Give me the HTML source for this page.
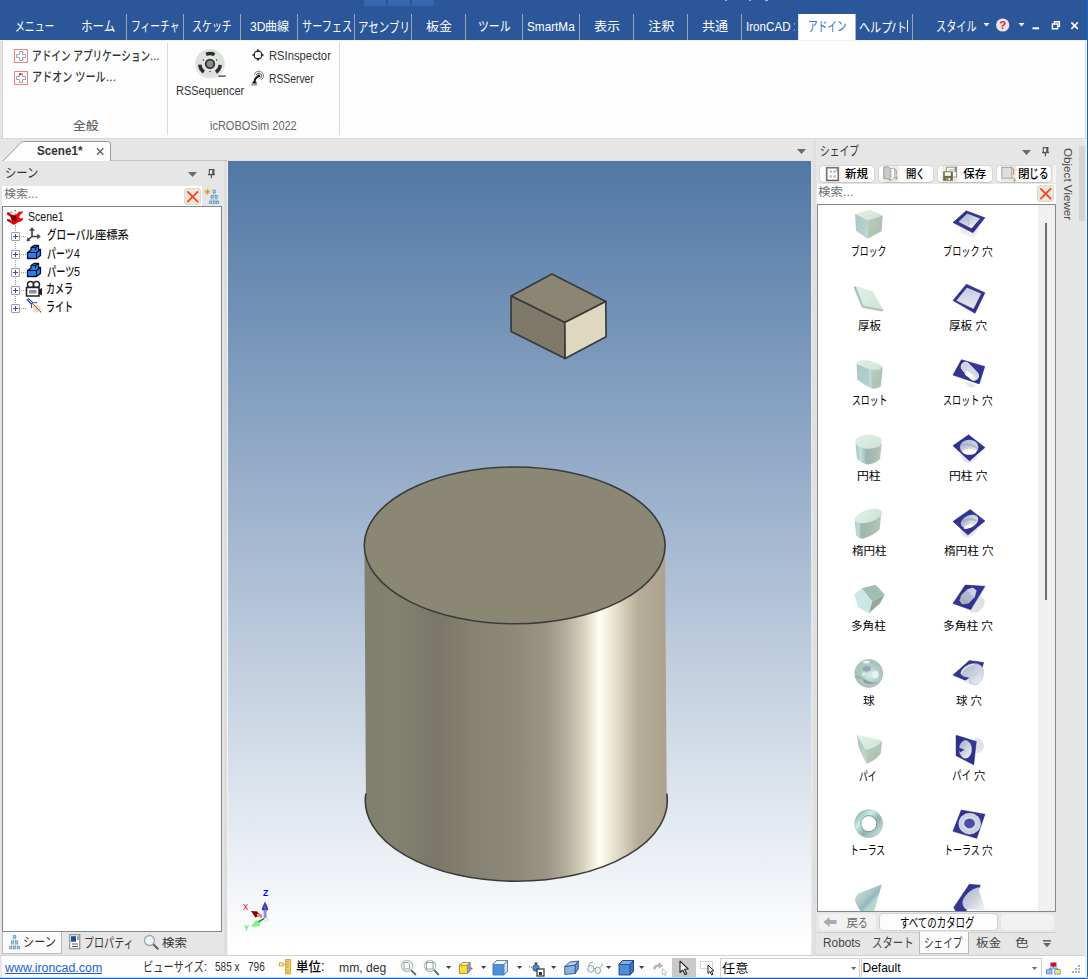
<!DOCTYPE html>
<html lang="ja">
<head>
<meta charset="utf-8">
<title>IronCAD - Scene1</title>
<style>
html,body{margin:0;padding:0;}
body{width:1088px;height:979px;overflow:hidden;background:#e6e6e6;font-family:"Liberation Sans","Noto Sans CJK JP",sans-serif;}
#app{position:relative;width:1088px;height:979px;overflow:hidden;background:#e6e6e6;}
#app *{box-sizing:border-box;}
.b{position:absolute;}
header,nav,section,aside,main,footer,ul,li,h1,h2,h3,button{margin:0;padding:0;border:0;background:none;font:inherit;display:block;list-style:none;}
.t{position:absolute;white-space:pre;line-height:1;transform-origin:0 0;margin:0;padding:0;font-weight:normal;text-decoration:none;}
.r{display:inline-block;white-space:pre;line-height:1;transform-origin:0 0;vertical-align:baseline;}
.j{font-weight:500;}
svg{position:absolute;overflow:visible;}
</style>
</head>
<body>
<div id="app">

<header>
<div class="b" style="left:0px;top:0px;width:1088px;height:40px;background:#2b579a;"></div>
<div class="b" style="left:364px;top:0px;width:22px;height:6px;background:#3566b0;"></div>
<div class="b" style="left:388px;top:0px;width:22px;height:6px;background:#3566b0;"></div>
<div class="b" style="left:412px;top:0px;width:22px;height:6px;background:#3566b0;"></div>
<div class="b" style="left:725.4px;top:0px;width:1.6px;height:1px;background:rgba(240,244,252,0.6);"></div>
<div class="b" style="left:749.4px;top:0px;width:1.6px;height:1px;background:rgba(240,244,252,0.6);"></div>
<div class="b" style="left:765.2px;top:0px;width:2.6px;height:1px;background:rgba(240,244,252,0.6);"></div>
</header>
<nav>
<div class="b" style="left:126px;top:14px;width:1px;height:26px;background:#9aa2b4;"></div>
<div class="b" style="left:183px;top:14px;width:1px;height:26px;background:#9aa2b4;"></div>
<div class="b" style="left:240px;top:14px;width:1px;height:26px;background:#9aa2b4;"></div>
<div class="b" style="left:297px;top:14px;width:1px;height:26px;background:#9aa2b4;"></div>
<div class="b" style="left:354px;top:14px;width:1px;height:26px;background:#9aa2b4;"></div>
<div class="b" style="left:411px;top:14px;width:1px;height:26px;background:#9aa2b4;"></div>
<div class="b" style="left:465px;top:14px;width:1px;height:26px;background:#9aa2b4;"></div>
<div class="b" style="left:522px;top:14px;width:1px;height:26px;background:#9aa2b4;"></div>
<div class="b" style="left:579px;top:14px;width:1px;height:26px;background:#9aa2b4;"></div>
<div class="b" style="left:633px;top:14px;width:1px;height:26px;background:#9aa2b4;"></div>
<div class="b" style="left:687px;top:14px;width:1px;height:26px;background:#9aa2b4;"></div>
<div class="b" style="left:741px;top:14px;width:1px;height:26px;background:#9aa2b4;"></div>
<div class="b" style="left:912px;top:14px;width:1px;height:26px;background:#9aa2b4;"></div>
<div class="b" style="left:798px;top:14px;width:58px;height:27px;background:#fff;border-left:1px solid #e4e8f0;border-right:1px solid #aeb4c0;"></div>
<span class="t" style="left:14.90px;top:20.00px;font-size:13px;color:#fff;"><span class="r" style="font-size:13.52px;width:39.31px;transform:scaleX(0.7269)">メニュー</span></span>
<span class="t" style="left:81.00px;top:20.00px;font-size:13px;color:#fff;"><span class="r" style="font-size:13.52px;width:34.28px;transform:scaleX(0.8537)">ホーム</span></span>
<span class="t" style="left:130.80px;top:20.00px;font-size:13px;color:#fff;"><span class="r" style="font-size:13.52px;width:48.50px;transform:scaleX(0.7219)">フィーチャ</span></span>
<span class="t" style="left:191.65px;top:20.00px;font-size:13px;color:#fff;"><span class="r" style="font-size:13.52px;width:39.83px;transform:scaleX(0.7365)">スケッチ</span></span>
<span class="t" style="left:249.75px;top:20.00px;font-size:13px;color:#fff;"><span class="r" style="font-size:13.0px;width:15.49px;transform:scaleX(0.9318)">3D</span><span class="r" style="font-size:11.96px;width:24.21px;transform:scaleX(1.0128)">曲線</span></span>
<span class="t" style="left:302.00px;top:20.00px;font-size:13px;color:#fff;"><span class="r" style="font-size:13.52px;width:50.09px;transform:scaleX(0.7500)">サーフェス</span></span>
<span class="t" style="left:357.80px;top:21.00px;font-size:13px;color:#fff;"><span class="r" style="font-size:13.52px;width:51.90px;transform:scaleX(0.7757)">アセンブリ</span></span>
<span class="t" style="left:425.95px;top:20.00px;font-size:13px;color:#fff;"><span class="r" style="font-size:11.96px;width:26.01px;transform:scaleX(1.0881)">板金</span></span>
<span class="t" style="left:477.75px;top:20.00px;font-size:13px;color:#fff;"><span class="r" style="font-size:13.52px;width:32.62px;transform:scaleX(0.8043)">ツール</span></span>
<span class="t" style="left:526.50px;top:20.00px;font-size:13px;color:#fff;"><span class="r" style="font-size:13px;width:47.67px;transform:scaleX(0.9039)">SmartMa</span></span>
<span class="t" style="left:594.30px;top:20.00px;font-size:13px;color:#fff;"><span class="r" style="font-size:11.96px;width:26.20px;transform:scaleX(1.0958)">表示</span></span>
<span class="t" style="left:648.25px;top:20.00px;font-size:13px;color:#fff;"><span class="r" style="font-size:11.96px;width:26.41px;transform:scaleX(1.1046)">注釈</span></span>
<span class="t" style="left:702.20px;top:20.00px;font-size:13px;color:#fff;"><span class="r" style="font-size:11.96px;width:26.10px;transform:scaleX(1.0917)">共通</span></span>
<span class="t" style="left:745.70px;top:20.00px;font-size:13px;color:#fff;"><span class="r" style="font-size:13px;width:44.57px;transform:scaleX(0.8939)">IronCAD</span></span>
<div class="b" style="left:794px;top:23px;width:1px;height:2px;background:#7f9ccb;"></div>
<div class="b" style="left:794px;top:29px;width:1px;height:2px;background:#7f9ccb;"></div>
<span class="t" style="left:808.10px;top:20.00px;font-size:13px;color:#2b6fc2;"><span class="r" style="font-size:13.52px;width:38.69px;transform:scaleX(0.7154)">アドイン</span></span>
<span class="t" style="left:858.95px;top:21.00px;font-size:13px;color:#fff;"><span class="r" style="font-size:13.52px;width:33.35px;transform:scaleX(0.8221)">ヘルプ</span><span class="r" style="font-size:13.0px;width:3.66px;transform:scaleX(1.0084)">/</span><span class="r" style="font-size:13.52px;width:11.12px;transform:scaleX(0.8221)">ト</span></span>
<div class="b" style="left:907px;top:20px;width:1px;height:12px;background:#e8eef8;"></div>
<span class="t" style="left:935.50px;top:20.00px;font-size:13px;color:#fff;"><span class="r" style="font-size:13.52px;width:40.56px;transform:scaleX(0.7500)">スタイル</span></span>
<svg style="left:980px;top:14px" width="108" height="26">
<path d="M3.5 9 h6 l-3 3.5z" fill="#fff"/>
<circle cx="22.7" cy="11" r="6.6" fill="#e9e6ea"/>
<text x="22.7" y="15.2" font-size="11.5" font-weight="bold" fill="#e2231a" text-anchor="middle" font-family="Liberation Sans, sans-serif">?</text>
<path d="M38.5 9 h6 l-3 3.5z" fill="#fff"/>
<rect x="52.5" y="13.3" width="6.5" height="2" fill="#fff"/>
<path d="M74.4 9.6 V7.8 h5 v4.6 h-1.6 M72.4 10 h5.2 v4.8 h-5.2z" fill="none" stroke="#fff" stroke-width="1.4"/>
<path d="M91.4 8.4 l6.4 6.4 M97.8 8.4 l-6.4 6.4" stroke="#fff" stroke-width="1.7" fill="none"/>
</svg>
</nav>
<section>
<div class="b" style="left:0px;top:40px;width:1088px;height:99px;background:#e4e4e4;"></div>
<div class="b" style="left:3px;top:40px;width:1082px;height:98px;background:#fdfdfd;"></div>
<div class="b" style="left:2px;top:41px;width:1px;height:97px;background:#d8d8d8;"></div>
<div class="b" style="left:0px;top:40px;width:1085px;height:1px;background:#f3f0ec;"></div>
<div class="b" style="left:1085px;top:40px;width:1px;height:98px;background:#dcdcdc;"></div>
<div class="b" style="left:1086px;top:40px;width:1px;height:939px;background:#f3efea;"></div>
<div class="b" style="left:1087px;top:0px;width:1px;height:979px;background:#1563c6;"></div>
<div class="b" style="left:0px;top:138px;width:1086px;height:1px;background:#d9d9d9;"></div>
<div class="b" style="left:167px;top:43px;width:1px;height:92px;background:#dadada;"></div>
<div class="b" style="left:339px;top:43px;width:1px;height:92px;background:#dadada;"></div>
<svg style="left:14px;top:49px" width="14" height="14"><rect x="0.5" y="0.5" width="13" height="13" fill="#fff" stroke="#e88585"/>
<path d="M5.5 2.5h3v3h3v3h-3v3h-3v-3h-3v-3h3z" fill="#fff" stroke="#a2a2a2" stroke-width="1"/></svg>
<svg style="left:14px;top:71px" width="14" height="14"><rect x="0.5" y="0.5" width="13" height="13" fill="#fff" stroke="#e88585"/>
<path d="M5.5 2.5h3v3h3v3h-3v3h-3v-3h-3v-3h3z" fill="#fff" stroke="#a2a2a2" stroke-width="1"/><path d="M5 4.2 q1.2-1.6 2.6-0.4" stroke="#e03030" stroke-width="1.4" fill="none"/></svg>
<span class="t" style="left:31.70px;top:49.00px;font-size:12.5px;color:#333;"><span class="r j" style="font-size:13.0px;width:118.22px;transform:scaleX(0.7418)">アドイン アプリケーション</span><span class="r" style="font-size:12.5px;width:9.48px;transform:scaleX(0.9100)">...</span></span>
<span class="t" style="left:31.90px;top:70.00px;font-size:12.5px;color:#333;"><span class="r j" style="font-size:13.0px;width:73.66px;transform:scaleX(0.7785)">アドオン ツール</span><span class="r" style="font-size:12.5px;width:9.95px;transform:scaleX(0.9549)">...</span></span>
<span class="t" style="left:72.75px;top:120.00px;font-size:12.5px;color:#666;"><span class="r j" style="font-size:11.5px;width:25.51px;transform:scaleX(1.1091)">全般</span></span>
<svg style="left:194px;top:48px" width="34" height="32">
<defs><radialGradient id="rsq" cx="50%" cy="45%" r="55%"><stop offset="0" stop-color="#e6e9e5"/><stop offset="0.8" stop-color="#dde1dc"/><stop offset="1" stop-color="#e9ece8"/></radialGradient></defs>
<circle cx="16" cy="15.9" r="14.9" fill="url(#rsq)"/>
<circle cx="16" cy="15.9" r="10.3" fill="none" stroke="#2f2f2f" stroke-width="3.5" stroke-dasharray="8.63 12.94" stroke-dashoffset="-1.08"/>
<circle cx="16" cy="15.9" r="5.2" fill="#333"/>
<circle cx="16" cy="15.9" r="3.3" fill="#8c8c8c"/>
<circle cx="9.4" cy="12" r="0.75" fill="#333"/><circle cx="22.6" cy="12" r="0.75" fill="#333"/><circle cx="16" cy="23.4" r="0.75" fill="#333"/>
<rect x="24.3" y="27.5" width="7.4" height="1.2" fill="#333"/>
</svg>
<span class="t" style="left:176.25px;top:85.00px;font-size:12px;color:#333;"><span class="r" style="font-size:12px;width:68.16px;transform:scaleX(0.9122)">RSSequencer</span></span>
<svg style="left:251px;top:48.4px" width="14" height="14"><circle cx="7" cy="7" r="3.9" fill="none" stroke="#222" stroke-width="1.2"/>
<path d="M7 1.2l1.1 2.4h-2.2zM7 12.8l1.1-2.4h-2.2zM1.2 7l2.4 1.1v-2.2zM12.8 7l-2.4 1.1v-2.2z" fill="#222" stroke="#222" stroke-width="0.5"/></svg>
<svg style="left:250px;top:70px" width="16" height="17"><path d="M4.4 12.8 Q4.4 8 8.6 6.2" stroke="#111" stroke-width="2" fill="none" stroke-linecap="round"/>
<path d="M6.14 5.43 A2.7 2.7 0 1 1 9.72 8.44" stroke="#444" stroke-width="1" fill="none"/>
<path d="M4.26 4.68 A4.7 4.7 0 1 1 11.15 9.97" stroke="#777" stroke-width="1" fill="none"/>
<circle cx="8.8" cy="5.9" r="1.3" fill="#111"/>
<path d="M2.8 11.6h3.4l0.6 2h-4.6z" fill="#111"/>
<rect x="1.2" y="13.4" width="6" height="2.1" fill="#9a9a9a"/></svg>
<span class="t" style="left:269.05px;top:50.00px;font-size:12px;color:#333;"><span class="r" style="font-size:12px;width:61.87px;transform:scaleX(0.9370)">RSInspector</span></span>
<span class="t" style="left:268.55px;top:73.00px;font-size:12px;color:#333;"><span class="r" style="font-size:12px;width:44.78px;transform:scaleX(0.8609)">RSServer</span></span>
<span class="t" style="left:210.00px;top:120.00px;font-size:12px;color:#666;"><span class="r" style="font-size:12px;width:86.73px;transform:scaleX(0.9158)">icROBOSim 2022</span></span>
</section>
<nav>
<div class="b" style="left:0px;top:139px;width:1086px;height:22px;background:#e6e6e6;"></div>
<div class="b" style="left:111px;top:160px;width:117px;height:1px;background:#c3c3c3;"></div>
<div class="b" style="left:228px;top:160px;width:583px;height:1px;background:#e3e0dd;"></div>
<svg style="left:0px;top:139px" width="120" height="23"><path d="M2.5 22.5 L21 3.5 q1-1 2.5-1 H108 q2.5 0 2.5 2.5 V22.5" fill="#fdfdfd" stroke="#9a9a9a" stroke-width="1"/>
<rect x="0" y="22" width="120" height="1.5" fill="#e6e6e6"/>
<path d="M97 9.3 l6.4 6.4 M103.4 9.3 l-6.4 6.4" stroke="#686868" stroke-width="1.5"/></svg>
<span class="t" style="left:37.40px;top:145.00px;font-size:12.5px;color:#333;font-weight:bold;"><span class="r" style="font-size:12.5px;width:45.48px;transform:scaleX(0.9348)">Scene1*</span></span>
<svg style="left:796.8px;top:149px" width="10" height="6"><path d="M0 0h9l-4.5 4.9z" fill="#6a6a6a"/></svg>
</nav>
<aside>
<div class="b" style="left:0px;top:161px;width:224px;height:795px;background:#e6e6e6;"></div>
<div class="b" style="left:224px;top:161px;width:4px;height:795px;background:#dedede;"></div>
<div class="b" style="left:227px;top:161px;width:1px;height:795px;background:#f2f0ee;"></div>
<span class="t" style="left:4.80px;top:166.00px;font-size:12.5px;color:#333;"><span class="r" style="font-size:13.0px;width:33.46px;transform:scaleX(0.8723)">シーン</span></span>
<svg style="left:187.9px;top:172px" width="10" height="6"><path d="M0 0h9l-4.5 4.9z" fill="#6a6a6a"/></svg>
<svg style="left:208.2px;top:168.9px" width="8" height="10"><path d="M1.3 0.6h4.6v4.8H1.3z" fill="#f4f4f4" stroke="#555" stroke-width="1.1"/><path d="M4.2 0.6h1.8v4.8H4.2z" fill="#555"/><path d="M0 5.6h7M3.4 5.8v3.4" stroke="#555" stroke-width="1.2" fill="none"/></svg>
<div class="b" style="left:2px;top:186px;width:200px;height:20px;background:#fff;"></div>
<span class="t" style="left:4.10px;top:188.00px;font-size:12.5px;color:#6e6e6e;"><span class="r" style="font-size:11.5px;width:24.03px;transform:scaleX(1.0448)">検索</span><span class="r" style="font-size:12.5px;width:10.02px;transform:scaleX(0.9612)">...</span></span>
<div class="b" style="left:183.5px;top:187.5px;width:17px;height:17px;background:#ece8d9;border:1px solid #dcd9cd;border-radius:3px;"></div>
<svg style="left:183.5px;top:187.5px" width="17" height="17"><path d="M3.3 3.3l10.8 10.8M14.1 3.3L3.3 14.1" stroke="#f2472c" stroke-width="1.9" fill="none"/></svg>
<svg style="left:204px;top:188px" width="17" height="17"><g stroke="#e0a21a" stroke-width="0.9"><path d="M3.4 0.8v6M0.4 3.8h6M1.3 1.7l4.2 4.2M5.5 1.7L1.3 5.9"/></g><circle cx="3.4" cy="3.8" r="1.3" fill="#d89a10"/>
<path d="M10.2 4.5 L8.2 8 M10.2 4.5 L12.2 8 M8.2 9.5 L6.5 13.5 M8.2 9.5 L10.2 13.5 M12.2 9.5 L10.2 13.5 M12.2 9.5 L13.6 13.5" stroke="#8db4dc" stroke-width="0.9" fill="none"/>
<g fill="#e4f0a0" stroke="#5e9ad2" stroke-width="0.9"><rect x="9.1" y="2.2" width="2.2" height="2.2"/><rect x="7.1" y="7.5" width="2.2" height="2.2"/><rect x="11.1" y="7.5" width="2.2" height="2.2"/><rect x="5.4" y="13.2" width="2.2" height="2.2"/><rect x="9.1" y="13.2" width="2.2" height="2.2"/><rect x="12.5" y="13.2" width="2.2" height="2.2"/></g></svg>
<div class="b" style="left:2px;top:206px;width:220px;height:726px;background:#fff;border:1px solid #82878e;"></div>
<ul>
<div class="b" style="left:15px;top:225px;width:1px;height:82px;border-left:1px dotted #9a9a9a;"></div>
<svg style="left:6.4px;top:210px" width="19" height="17"><path d="M1 2.6 L3 2.6 L5.4 4.6 L9.4 5.2 L12.4 2.4 L16.6 1.2 L17 2.6 L14.4 4.6 L13 7.4 L15 8.6 L17 8 L17 9.8 L14.6 11.4 L11.6 12.4 L9 14.6 L7 14.6 L4.6 12.6 L1 10.8 L1.2 9.2 L3.4 9.6 L5.8 11 L4.6 7 L1 4.4z" fill="#ee0a0a"/>
<path d="M4.4 5.4 L9.6 5.6 L11 8 L10.6 11.4 L8.6 11 L5.6 9.6z" fill="#7c0404"/>
<path d="M1 2.6 L3 2.6 L5.4 4.6 L4.4 5.6z M1.2 9.2 L3.4 9.6 L5.8 11 L8.4 13 L7 14.6 L4.6 12.6 L1 10.8z" fill="#c40808"/>
<g fill="#222"><rect x="8.6" y="0" width="1.1" height="1.1"/><rect x="4.6" y="1.6" width="1.1" height="1.1"/><rect x="12.6" y="1.6" width="1.1" height="1.1"/><rect x="8.6" y="3.6" width="1.1" height="1.1"/></g></svg>
<span class="t" style="left:27.90px;top:211.00px;font-size:12px;color:#111;"><span class="r" style="font-size:12px;width:35.74px;transform:scaleX(0.8780)">Scene1</span></span>
<div class="b" style="left:11px;top:232px;width:9px;height:9px;background:#fff;border:1px solid #9aa0a8;border-radius:1px;"></div>
<div class="b" style="left:13px;top:236px;width:5px;height:1px;background:#3c4f8c;"></div>
<div class="b" style="left:15px;top:234px;width:1px;height:5px;background:#3c4f8c;"></div>
<div class="b" style="left:21px;top:236px;width:5px;height:1px;border-top:1px dotted #9a9a9a;"></div>
<div class="b" style="left:11px;top:250px;width:9px;height:9px;background:#fff;border:1px solid #9aa0a8;border-radius:1px;"></div>
<div class="b" style="left:13px;top:254px;width:5px;height:1px;background:#3c4f8c;"></div>
<div class="b" style="left:15px;top:252px;width:1px;height:5px;background:#3c4f8c;"></div>
<div class="b" style="left:21px;top:254px;width:5px;height:1px;border-top:1px dotted #9a9a9a;"></div>
<div class="b" style="left:11px;top:268px;width:9px;height:9px;background:#fff;border:1px solid #9aa0a8;border-radius:1px;"></div>
<div class="b" style="left:13px;top:272px;width:5px;height:1px;background:#3c4f8c;"></div>
<div class="b" style="left:15px;top:270px;width:1px;height:5px;background:#3c4f8c;"></div>
<div class="b" style="left:21px;top:272px;width:5px;height:1px;border-top:1px dotted #9a9a9a;"></div>
<div class="b" style="left:11px;top:286px;width:9px;height:9px;background:#fff;border:1px solid #9aa0a8;border-radius:1px;"></div>
<div class="b" style="left:13px;top:290px;width:5px;height:1px;background:#3c4f8c;"></div>
<div class="b" style="left:15px;top:288px;width:1px;height:5px;background:#3c4f8c;"></div>
<div class="b" style="left:21px;top:290px;width:5px;height:1px;border-top:1px dotted #9a9a9a;"></div>
<div class="b" style="left:11px;top:304px;width:9px;height:9px;background:#fff;border:1px solid #9aa0a8;border-radius:1px;"></div>
<div class="b" style="left:13px;top:308px;width:5px;height:1px;background:#3c4f8c;"></div>
<div class="b" style="left:15px;top:306px;width:1px;height:5px;background:#3c4f8c;"></div>
<div class="b" style="left:21px;top:308px;width:5px;height:1px;border-top:1px dotted #9a9a9a;"></div>
<svg style="left:25.2px;top:226.4px" width="16" height="16"><path d="M7 2v8.5M7 10.5h7M7 10.5L2 14.5" stroke="#444" stroke-width="1.6" fill="none"/>
<path d="M7 1.2l3 3.6H4zM15.8 10.5l-3.6 2.8V7.7zM1.8 15.4l0.6-4.2 3.2 3.2z" fill="#444"/></svg>
<svg style="left:26px;top:244px" width="16" height="16"><path d="M1.5 8.5 L5 6 L5 3.5 L8 1.5 L12.5 1.5 L12.5 5.5 L14.5 5.5 L14.5 11.5 L10.5 14.5 L1.5 14.5z" fill="#2f7fe0" stroke="#06102e" stroke-width="1.3" stroke-linejoin="round"/>
<path d="M1.5 8.5 H10.5 V14.5 M10.5 8.5 L14.5 5.5 M5 3.5 H9.5 V6 M9.5 3.5 L12.5 1.5" fill="none" stroke="#06102e" stroke-width="1.1"/></svg>
<svg style="left:26px;top:262px" width="16" height="16"><path d="M1.5 8.5 L5 6 L5 3.5 L8 1.5 L12.5 1.5 L12.5 5.5 L14.5 5.5 L14.5 11.5 L10.5 14.5 L1.5 14.5z" fill="#2f7fe0" stroke="#06102e" stroke-width="1.3" stroke-linejoin="round"/>
<path d="M1.5 8.5 H10.5 V14.5 M10.5 8.5 L14.5 5.5 M5 3.5 H9.5 V6 M9.5 3.5 L12.5 1.5" fill="none" stroke="#06102e" stroke-width="1.1"/></svg>
<svg style="left:25px;top:280px" width="18" height="17"><circle cx="5.5" cy="4.5" r="3" fill="#fff" stroke="#222" stroke-width="1.4"/>
<circle cx="11.5" cy="4.5" r="3" fill="#fff" stroke="#222" stroke-width="1.4"/>
<rect x="1.5" y="7.5" width="12.5" height="8.5" fill="#fff" stroke="#222" stroke-width="1.5"/>
<rect x="4" y="10" width="7.5" height="3.5" fill="#8c8cb4"/>
<path d="M14 9.5l3-1.5v7.5l-3-1.5z" fill="#222"/></svg>
<svg style="left:25px;top:297px" width="18" height="18"><circle cx="11.6" cy="11.6" r="3.9" fill="#e6e2c4"/>
<path d="M1.4 2.6 L3.6 1 L8.6 5.8 L6.2 8z" fill="#1c4fa2"/><path d="M3.4 2.6 L7 6" stroke="#dfe8f6" stroke-width="1"/>
<path d="M6.4 7.6 L6.6 11 M8.4 5.8 L12 5.6" stroke="#1c4fa2" stroke-width="1"/>
<path d="M7.6 6.8 L15.4 14.6" stroke="#e81818" stroke-width="1"/><circle cx="15.6" cy="14.8" r="0.6" fill="#222"/></svg>
<li class="t" style="left:46.90px;top:228.00px;font-size:12.5px;color:#111;"><span class="r j" style="font-size:13.0px;width:47.84px;transform:scaleX(0.7375)">グローバル</span><span class="r j" style="font-size:11.5px;width:33.92px;transform:scaleX(0.9833)">座標系</span></li>
<li class="t" style="left:47.10px;top:247.00px;font-size:12.5px;color:#111;"><span class="r j" style="font-size:13.0px;width:26.67px;transform:scaleX(0.6881)">パーツ</span><span class="r" style="font-size:12.5px;width:5.87px;transform:scaleX(0.8441)">4</span></li>
<li class="t" style="left:46.60px;top:265.00px;font-size:12.5px;color:#111;"><span class="r j" style="font-size:13.0px;width:27.43px;transform:scaleX(0.7078)">パーツ</span><span class="r" style="font-size:12.5px;width:6.04px;transform:scaleX(0.8682)">5</span></li>
<li class="t" style="left:46.40px;top:282.00px;font-size:12.5px;color:#111;"><span class="r j" style="font-size:13.0px;width:27.09px;transform:scaleX(0.6944)">カメラ</span></li>
<li class="t" style="left:46.40px;top:300.00px;font-size:12.5px;color:#111;"><span class="r j" style="font-size:13.0px;width:27.09px;transform:scaleX(0.6944)">ライト</span></li>
</ul>
<div class="b" style="left:2px;top:932px;width:60px;height:22px;background:#fbfbfb;border:1px solid #b9b9b9;border-top:0;"></div>
<svg style="left:8.5px;top:934.5px" width="12" height="15"><path d="M5.6 2.5 L3.6 6.5 M5.6 2.5 L7.6 6.5 M3.6 8 L1.8 12 M3.6 8 L5.6 12 M7.6 8 L5.6 12 M7.6 8 L9.4 12" stroke="#8db4dc" stroke-width="0.9" fill="none"/>
<g fill="#e4f0a0" stroke="#5e9ad2" stroke-width="0.9"><rect x="4.5" y="0.6" width="2.2" height="2.2"/><rect x="2.5" y="6" width="2.2" height="2.2"/><rect x="6.5" y="6" width="2.2" height="2.2"/><rect x="0.7" y="11.6" width="2.2" height="2.2"/><rect x="4.5" y="11.6" width="2.2" height="2.2"/><rect x="8.3" y="11.6" width="2.2" height="2.2"/></g></svg>
<span class="t" style="left:23.00px;top:935.00px;font-size:12.5px;color:#333;"><span class="r" style="font-size:13.0px;width:33.03px;transform:scaleX(0.8611)">シーン</span></span>
<svg style="left:69px;top:934px" width="12" height="16"><rect x="0.8" y="0.8" width="10" height="14" fill="#fff" stroke="#7a7a7a" stroke-width="1"/>
<rect x="2" y="2.2" width="5" height="5.5" fill="#1e4d9c"/>
<path d="M8 3h2M8 5h2M3 10h6M3 12.5h6" stroke="#555" stroke-width="1"/></svg>
<span class="t" style="left:83.70px;top:936.00px;font-size:12.5px;color:#333;"><span class="r" style="font-size:13.0px;width:49.68px;transform:scaleX(0.7734)">プロパティ</span></span>
<svg style="left:143px;top:934px" width="17" height="17"><circle cx="6.5" cy="6.5" r="5" fill="#e8f6fa" stroke="#9aa8ae" stroke-width="1.3"/>
<path d="M10.3 10.3l5 5" stroke="#666" stroke-width="2.2"/></svg>
<span class="t" style="left:162.00px;top:937.00px;font-size:12.5px;color:#333;"><span class="r" style="font-size:11.5px;width:25.01px;transform:scaleX(1.0874)">検索</span></span>
</aside>
<main>
<div class="b" style="left:228px;top:161px;width:583px;height:794px;background:linear-gradient(to bottom,#5177a5 0%,#ffffff 99%);"></div>
<svg style="left:228px;top:161px" width="583" height="795" viewBox="0 0 583 795">
<defs>
<linearGradient id="cyl" x1="364" x2="666" y1="0" y2="0" gradientUnits="userSpaceOnUse">
<stop offset="0" stop-color="#80806f"/>
<stop offset="0.1" stop-color="#838270"/>
<stop offset="0.24" stop-color="#7a7768"/>
<stop offset="0.36" stop-color="#858271"/>
<stop offset="0.52" stop-color="#8f8b7a"/>
<stop offset="0.6" stop-color="#9a9484"/>
<stop offset="0.66" stop-color="#aeaa97"/>
<stop offset="0.725" stop-color="#d4d0bc"/>
<stop offset="0.78" stop-color="#fffff0"/>
<stop offset="0.84" stop-color="#e0dac6"/>
<stop offset="0.91" stop-color="#b6ad98"/>
<stop offset="1" stop-color="#aca28d"/>
</linearGradient>
</defs>
<g transform="translate(-228,-161)">
<path d="M364.4 543 L365.9 793.5 A151 80.6 0 1 0 666.7 793.5 L665 545 A150.3 78.4 0 0 1 364.4 543z" fill="url(#cyl)"/>
<path d="M365.9 793.5 A151 80.6 0 1 0 666.7 793.5" fill="none" stroke="#3b3b3b" stroke-width="1.6"/>
<ellipse cx="514.7" cy="545.4" rx="150.4" ry="78.4" fill="#8b8775" stroke="#3b3b3b" stroke-width="1.6"/>
<g stroke="#3a3a3a" stroke-width="1.7" stroke-linejoin="round">
<path d="M551.9 273.9 L605.8 301.5 L564.8 322.6 L511.1 296z" fill="#8b8674"/>
<path d="M511.1 296 L564.8 322.6 L565.1 358.5 L511.1 331.4z" fill="#7e7969"/>
<path d="M564.8 322.6 L605.8 301.5 L606.1 336.8 L565.1 358.5z" fill="#dfd8c1"/>
</g>
</g>
</svg>
<svg style="left:232px;top:880px" width="50" height="55">
<path d="M33 21.6 L36.2 28.5 L35.6 30.4 L34.2 30.2 L34.2 37.5 L31.8 37.5 L31.8 30.2 L30.4 30.4 L29.8 28.5z" fill="#34349c"/>
<path d="M32 30 h2.2 v7.8 h-2.2z" fill="#8a8af4"/>
<path d="M33 24 L34.6 28.6 L33 30 L31.6 28.6z" fill="#5a5ac8"/>
<path d="M19 31 L25.6 31.6 L27.4 34 L30.6 36 L29.6 38.6 L25.6 36.6 L23.6 37.6z" fill="#f08c8c"/>
<path d="M19 31 L25.4 31.6 L26.2 33.4 L24.8 34.6 L25.4 36.8 L23.4 37.6z" fill="#7c0a0a"/>
<path d="M26.6 33.6 l1 0.6 M28.4 34.8 l1 0.6" stroke="#7c0a0a" stroke-width="1"/>
<path d="M19 46.6 L23.6 40.4 L26 40.6 L28.4 42.6 L27.8 46 L24.6 46.8z" fill="#86f086"/>
<path d="M26.4 41.8 L32.4 38.4" stroke="#108410" stroke-width="1.5"/>
<circle cx="33.8" cy="39.6" r="1.8" fill="#f6f6f6" stroke="#9a9a9a" stroke-width="0.7" stroke-dasharray="1.2 1.2"/>
</svg>
<span class="t" style="left:262.60px;top:889.00px;font-size:8.5px;color:#0000ff;font-weight:bold;"><span class="r" style="font-size:8.5px;width:5.25px;transform:scaleX(1.0083)">Z</span></span>
<span class="t" style="left:242.60px;top:903.00px;font-size:8.5px;color:#ff0000;"><span class="r" style="font-size:8.5px;width:5.29px;transform:scaleX(0.9333)">X</span></span>
<span class="t" style="left:243.50px;top:924.00px;font-size:8.5px;color:#00ee00;"><span class="r" style="font-size:8.5px;width:4.92px;transform:scaleX(0.8667)">Y</span></span>
</main>
<aside>
<div class="b" style="left:811px;top:139px;width:275px;height:817px;background:#e6e6e6;"></div>
<div class="b" style="left:813px;top:140px;width:3px;height:816px;background:#dfdfdf;"></div>
<span class="t" style="left:820.30px;top:144.00px;font-size:12.5px;color:#333;"><span class="r" style="font-size:13.0px;width:39.01px;transform:scaleX(0.7500)">シェイプ</span></span>
<svg style="left:1022.2px;top:150px" width="10" height="6"><path d="M0 0h9l-4.5 4.9z" fill="#6a6a6a"/></svg>
<svg style="left:1042px;top:147px" width="8" height="10"><path d="M1.3 0.6h4.6v4.8H1.3z" fill="#f4f4f4" stroke="#555" stroke-width="1.1"/><path d="M4.2 0.6h1.8v4.8H4.2z" fill="#555"/><path d="M0 5.6h7M3.4 5.8v3.4" stroke="#555" stroke-width="1.2" fill="none"/></svg>
<div class="b" style="left:1058px;top:139px;width:28px;height:817px;background:#e6e6e6;"></div>
<div class="b" style="left:1079px;top:146px;width:6px;height:75px;background:#d4d4d4;"></div>
<span class="t" style="left:1073.00px;top:147.50px;font-size:11.5px;color:#4a4a4a;transform:rotate(90deg);"><span class="r" style="font-size:11.5px;width:72.20px;transform:scaleX(1.0114)">Object Viewer</span></span>
<div class="b" style="left:818.5px;top:165px;width:56.5px;height:18px;background:#fdfdfd;border:1px solid #d6d6d6;border-bottom-color:#c4c4c4;border-radius:5px;"></div>
<svg style="left:824.5px;top:166px" width="16" height="16"><rect x="0" y="0" width="15.5" height="16" fill="#efead9"/><rect x="1.8" y="1.8" width="11.4" height="12.6" fill="#fdfdfd" stroke="#5c5c5c" stroke-width="1.3"/><path d="M11.5 1.5h2v4h-2z" fill="#8a8a8a"/><path d="M4.6 4.6h2.2v2.2H4.6zM8.4 4.6h2.2v2.2H8.4zM4.6 9.2h2.2v2.2H4.6zM8.4 9.2h2.2v2.2H8.4z" fill="#b4b4b4"/></svg>
<span class="t" style="left:844.90px;top:168.00px;font-size:12.5px;color:#000;"><span class="r j" style="font-size:11.5px;width:23.00px;transform:scaleX(1.0000)">新規</span></span>
<div class="b" style="left:877.5px;top:165px;width:56.5px;height:18px;background:#fdfdfd;border:1px solid #d6d6d6;border-bottom-color:#c4c4c4;border-radius:5px;"></div>
<svg style="left:883px;top:166px" width="16" height="16"><rect x="0" y="0" width="15.5" height="16" fill="#efead9"/><path d="M0.8 1.2 L5.2 0.8 L7.4 2.6 V14.6 L3.2 12.4 H0.8z" fill="#c9cdd1" stroke="#8e9296" stroke-width="0.8"/><path d="M7.4 2.6 H11.6 V11 L7.4 14.6z" fill="#fff" stroke="#9a9a9a" stroke-width="0.7"/><path d="M8.6 5v0.8M8.6 7.4v0.8M8.6 9.8v0.8" stroke="#888" stroke-width="0.9"/><path d="M11.6 3 l1.6 1.4 V9.4 M11.2 12.2 l3-1.4 -1.4 3.2" fill="none" stroke="#8d8d8d" stroke-width="0.9"/></svg>
<span class="t" style="left:905.70px;top:167.00px;font-size:12.5px;color:#000;"><span class="r j" style="font-size:11.5px;width:10.36px;transform:scaleX(0.9005)">開</span><span class="r j" style="font-size:13.0px;width:8.79px;transform:scaleX(0.6754)">く</span></span>
<div class="b" style="left:936.5px;top:165px;width:56.5px;height:18px;background:#fdfdfd;border:1px solid #d6d6d6;border-bottom-color:#c4c4c4;border-radius:5px;"></div>
<svg style="left:942px;top:166px" width="16" height="16"><rect x="0" y="0" width="15.5" height="16" fill="#efead9"/><rect x="4.6" y="1.2" width="10" height="9.8" fill="#fdfdfd" stroke="#8e8e8e" stroke-width="0.9"/><path d="M6.5 3.4h6M6.5 5.2h6" stroke="#b5b5b5" stroke-width="0.8"/><path d="M12.6 1.2h2v5h-2z" fill="#8a8a8a"/><rect x="1.2" y="5.4" width="9.6" height="9.4" fill="#6e6d35"/><rect x="2.8" y="6.2" width="6" height="3.6" fill="#fff"/><rect x="3.6" y="11.6" width="5" height="3.2" fill="#8c8c94"/><rect x="6.6" y="12.2" width="1.4" height="2" fill="#fff"/></svg>
<span class="t" style="left:963.25px;top:168.00px;font-size:12.5px;color:#000;"><span class="r j" style="font-size:11.5px;width:23.00px;transform:scaleX(1.0000)">保存</span></span>
<div class="b" style="left:995.5px;top:165px;width:56.5px;height:18px;background:#fdfdfd;border:1px solid #d6d6d6;border-bottom-color:#c4c4c4;border-radius:5px;"></div>
<svg style="left:1001px;top:166px" width="16" height="16"><rect x="0" y="0" width="15.5" height="16" fill="#efead9"/><rect x="0.8" y="1.4" width="10" height="10.8" fill="#dedede" stroke="#a2a2a2" stroke-width="0.9"/><path d="M10.8 2 l1.8 1 V9" fill="none" stroke="#8d8d8d" stroke-width="0.9"/><path d="M11.4 11.4 q3 0.4 2.4 3.6 M12.2 14.4 l1.4 1 1-1.6" fill="none" stroke="#9a9a9a" stroke-width="0.9"/></svg>
<span class="t" style="left:1017.80px;top:167.00px;font-size:12.5px;color:#000;"><span class="r j" style="font-size:11.5px;width:11.60px;transform:scaleX(1.0084)">閉</span><span class="r j" style="font-size:13.0px;width:19.68px;transform:scaleX(0.7563)">じる</span></span>
<div class="b" style="left:1053px;top:165px;width:3px;height:18px;background:#f4f4f4;border-radius:3px 0 0 3px;"></div>
<div class="b" style="left:817px;top:184px;width:239px;height:20px;background:#fff;"></div>
<span class="t" style="left:818.00px;top:186.00px;font-size:12.5px;color:#6e6e6e;"><span class="r" style="font-size:11.5px;width:25.02px;transform:scaleX(1.0876)">検索</span><span class="r" style="font-size:12.5px;width:10.43px;transform:scaleX(1.0006)">...</span></span>
<div class="b" style="left:1037px;top:185.4px;width:17.4px;height:17px;background:#ece8d9;border:1px solid #dcd9cd;border-radius:3px;"></div>
<svg style="left:1037.2px;top:185.4px" width="17" height="17"><path d="M3.3 3.3l10.8 10.8M14.1 3.3L3.3 14.1" stroke="#f2472c" stroke-width="1.9" fill="none"/></svg>
<div class="b" style="left:817px;top:204px;width:239px;height:708px;background:#fff;border:1px solid #82878e;"></div>
<div class="b" style="left:1038px;top:205px;width:17px;height:706px;background:#f0f0f0;"></div>
<div class="b" style="left:1045px;top:223px;width:2px;height:377px;background:#6e6e6e;"></div>
<ul>
<svg width="0" height="0" style="left:0;top:0"><defs>
<linearGradient id="gTop" x1="0" y1="0" x2="1" y2="1"><stop offset="0" stop-color="#e2f1e6"/><stop offset="1" stop-color="#cfe2d6"/></linearGradient>
<linearGradient id="gLeft" x1="0" y1="0" x2="1" y2="1"><stop offset="0" stop-color="#a9c6c6"/><stop offset="1" stop-color="#bcd6d4"/></linearGradient>
<linearGradient id="gRight" x1="0" y1="0" x2="1" y2="1"><stop offset="0" stop-color="#bccdbb"/><stop offset="1" stop-color="#a9bfb0"/></linearGradient>
<linearGradient id="gCyl" x1="0" y1="0" x2="1" y2="0"><stop offset="0" stop-color="#a6c2c2"/><stop offset="0.2" stop-color="#c6dedd"/><stop offset="0.42" stop-color="#9cb5b3"/><stop offset="0.7" stop-color="#a7bbb0"/><stop offset="1" stop-color="#b9cbba"/></linearGradient>
<linearGradient id="gEcyl" x1="0" y1="0" x2="1" y2="0"><stop offset="0" stop-color="#a4c0c0"/><stop offset="0.12" stop-color="#c2e0e0"/><stop offset="0.25" stop-color="#9eb6b0"/><stop offset="1" stop-color="#b2c6b2"/></linearGradient>
<linearGradient id="gHole" x1="0" y1="0" x2="1" y2="1"><stop offset="0" stop-color="#a6acbf"/><stop offset="0.6" stop-color="#d3d8e8"/><stop offset="1" stop-color="#f2f4f8"/></linearGradient>
<linearGradient id="gHole2" x1="0" y1="0" x2="0" y2="1"><stop offset="0" stop-color="#c5c9de"/><stop offset="1" stop-color="#e8e9ec"/></linearGradient>
<linearGradient id="gNavy" x1="0" y1="0" x2="1" y2="1"><stop offset="0" stop-color="#262986"/><stop offset="0.5" stop-color="#353894"/><stop offset="1" stop-color="#262986"/></linearGradient>
<radialGradient id="gSph" cx="55%" cy="55%" r="55%"><stop offset="0" stop-color="#d8eee8"/><stop offset="0.55" stop-color="#b4ccc8"/><stop offset="0.85" stop-color="#a9c2bc"/><stop offset="1" stop-color="#b9c9bd"/></radialGradient>
<linearGradient id="gCone" x1="0" y1="0" x2="1" y2="1"><stop offset="0" stop-color="#d4e8d6"/><stop offset="0.45" stop-color="#a9c6c4"/><stop offset="0.55" stop-color="#8fb6c4"/><stop offset="0.65" stop-color="#b2d6cc"/><stop offset="1" stop-color="#c2e0d0"/></linearGradient>
<linearGradient id="gTor" x1="0" y1="0" x2="1" y2="1"><stop offset="0" stop-color="#8fb0b4"/><stop offset="0.3" stop-color="#cdeeea"/><stop offset="0.6" stop-color="#92b0b0"/><stop offset="1" stop-color="#c2e2dc"/></linearGradient>
<filter id="fBlur" x="-20%" y="-20%" width="140%" height="140%"><feGaussianBlur stdDeviation="18"/></filter>
</defs></svg>
<li>
<svg style="left:848px;top:206px" width="40" height="36" viewBox="0 0 1088 979"><path d="M190 220 L580 105 L945 250 L540 385z" fill="url(#gTop)"/><path d="M190 220 L540 385 L535 890 L220 670z" fill="url(#gLeft)"/><path d="M540 385 L945 250 L915 690 L535 890z" fill="url(#gRight)"/></svg>
<span class="t" style="left:850.60px;top:246.00px;font-size:12px;color:#000;"><span class="r" style="font-size:12.48px;width:35.29px;transform:scaleX(0.7073)">ブロック</span></span>
</li><li>
<svg style="left:948px;top:206px" width="40" height="36" viewBox="0 0 1088 979"><path d="M350 600 L860 560 L850 650 L690 870 L350 720z" fill="#ededf1"/><path d="M135 450 L495 130 L1005 320 L680 730z" fill="url(#gNavy)" stroke="#1f2280" stroke-width="14" stroke-linejoin="round"/><path d="M300 425 L525 215 L860 345 L640 600z" fill="url(#gHole)" stroke="#f1f5f1" stroke-width="14" stroke-linejoin="round"/><path d="M545 300 L560 540" stroke="#aab0c4" stroke-width="18"/><path d="M545 545 L640 595 L700 520z" fill="#fff"/></svg>
<span class="t" style="left:942.80px;top:246.00px;font-size:12px;color:#000;"><span class="r" style="font-size:12.48px;width:39.05px;transform:scaleX(0.7320)">ブロック </span><span class="r" style="font-size:11.04px;width:10.77px;transform:scaleX(0.9760)">穴</span></span>
</li>
<li>
<svg style="left:848px;top:281px" width="40" height="36" viewBox="0 0 1088 979"><path d="M150 170 L220 130 L420 660 L380 730z" fill="#a6c6c6"/><path d="M380 730 L420 660 L950 760 L965 800 L920 830z" fill="#b3c7b3"/><path d="M220 130 L670 280 L950 760 L420 660z" fill="url(#gTop)"/></svg>
<span class="t" style="left:858.00px;top:320.00px;font-size:12px;color:#000;"><span class="r" style="font-size:11.04px;width:22.86px;transform:scaleX(1.0364)">厚板</span></span>
</li><li>
<svg style="left:948px;top:281px" width="40" height="36" viewBox="0 0 1088 979"><path d="M135 530 L500 85 L1005 320 L735 880z" fill="url(#gNavy)" stroke="#1f2280" stroke-width="14" stroke-linejoin="round"/><path d="M240 530 L515 190 L890 350 L690 750z" fill="url(#gHole2)" stroke="#f4f7f4" stroke-width="14" stroke-linejoin="round"/></svg>
<span class="t" style="left:949.00px;top:320.00px;font-size:12px;color:#000;"><span class="r" style="font-size:11.04px;width:37.98px;transform:scaleX(1.0500)">厚板 穴</span></span>
</li>
<li>
<svg style="left:848px;top:356px" width="40" height="36" viewBox="0 0 1088 979"><path d="M235 200 L250 640 Q450 800 640 880 Q800 900 890 820 L945 300z" fill="url(#gLeft)"/><path d="M630 390 Q850 380 940 310 L890 820 Q800 900 640 880z" fill="url(#gRight)"/><path d="M585 385 L630 395 L635 880 L590 865z" fill="#c6dcdc"/><path d="M230 170 Q280 100 450 110 L600 130 Q900 230 945 290 Q900 370 800 370 L620 385 Q300 260 230 200z" fill="url(#gTop)"/></svg>
<span class="t" style="left:851.60px;top:395.00px;font-size:12px;color:#000;"><span class="r" style="font-size:12.48px;width:35.50px;transform:scaleX(0.7116)">スロット</span></span>
</li><li>
<svg style="left:948px;top:356px" width="40" height="36" viewBox="0 0 1088 979"><path d="M430 680 L760 780 Q700 870 580 860z" fill="#e6e6ea"/><path d="M135 520 L365 100 L1000 285 L850 760z" fill="url(#gNavy)" stroke="#1f2280" stroke-width="14" stroke-linejoin="round"/><path d="M478 292 L712 538" stroke="#eef1f4" stroke-width="265" stroke-linecap="round"/><path d="M478 292 L712 538" stroke="#cfd3e5" stroke-width="240" stroke-linecap="round"/><path d="M520 470 L690 600" stroke="#fff" stroke-width="130" stroke-linecap="round"/><path d="M560 330 L770 560" stroke="#d6daea" stroke-width="90" stroke-linecap="round"/></svg>
<span class="t" style="left:943.40px;top:395.00px;font-size:12px;color:#000;"><span class="r" style="font-size:12.48px;width:38.90px;transform:scaleX(0.7292)">スロット </span><span class="r" style="font-size:11.04px;width:10.73px;transform:scaleX(0.9723)">穴</span></span>
</li>
<li>
<svg style="left:848px;top:431px" width="40" height="36" viewBox="0 0 1088 979"><path d="M205 350 L245 760 Q400 900 560 910 Q760 880 870 760 L920 350z" fill="url(#gCyl)"/><ellipse cx="560" cy="290" rx="360" ry="195" fill="url(#gTop)"/></svg>
<span class="t" style="left:857.45px;top:470.00px;font-size:12px;color:#000;"><span class="r" style="font-size:11.04px;width:23.65px;transform:scaleX(1.0720)">円柱</span></span>
</li><li>
<svg style="left:948px;top:431px" width="40" height="36" viewBox="0 0 1088 979"><path d="M340 650 Q380 860 560 870 Q760 850 800 680z" fill="#e7e7ec"/><path d="M135 400 L560 105 L1005 450 L585 815z" fill="url(#gNavy)" stroke="#1f2280" stroke-width="14" stroke-linejoin="round"/><ellipse cx="575" cy="440" rx="250" ry="205" fill="url(#gHole)"/><path d="M340 400 Q560 300 810 470" stroke="#a5abbc" stroke-width="60" fill="none" opacity="0.7"/><ellipse cx="580" cy="560" rx="190" ry="80" fill="#fff"/></svg>
<span class="t" style="left:949.10px;top:470.00px;font-size:12px;color:#000;"><span class="r" style="font-size:11.04px;width:38.45px;transform:scaleX(1.0631)">円柱 穴</span></span>
</li>
<li>
<svg style="left:848px;top:506px" width="40" height="36" viewBox="0 0 1088 979"><path d="M185 420 L225 800 Q300 890 400 890 Q650 830 860 640 L900 250z" fill="url(#gEcyl)"/><ellipse cx="555" cy="270" rx="390" ry="170" fill="url(#gTop)" transform="rotate(-17 555 270)"/></svg>
<span class="t" style="left:852.15px;top:545.00px;font-size:12px;color:#000;"><span class="r" style="font-size:11.04px;width:34.61px;transform:scaleX(1.0457)">楕円柱</span></span>
</li><li>
<svg style="left:948px;top:506px" width="40" height="36" viewBox="0 0 1088 979"><path d="M330 620 Q340 850 520 860 Q760 800 810 600z" fill="#e5e5ec"/><path d="M135 420 L605 95 L1005 405 L540 790z" fill="url(#gNavy)" stroke="#1f2280" stroke-width="14" stroke-linejoin="round"/><ellipse cx="585" cy="420" rx="250" ry="165" fill="url(#gHole)" transform="rotate(-25 585 420)"/><path d="M380 440 Q560 300 780 400" stroke="#a1a7b8" stroke-width="60" fill="none" opacity="0.7"/><ellipse cx="570" cy="555" rx="150" ry="45" fill="#fff" transform="rotate(-20 570 555)"/></svg>
<span class="t" style="left:944.35px;top:545.00px;font-size:12px;color:#000;"><span class="r" style="font-size:11.04px;width:49.72px;transform:scaleX(1.0533)">楕円柱 穴</span></span>
</li>
<li>
<svg style="left:848px;top:581px" width="40" height="36" viewBox="0 0 1088 979"><path d="M170 370 L380 195 L660 560 L570 880 L280 720z" fill="#cbe7e3"/><path d="M380 195 L750 105 L1000 370 L660 560z" fill="#a2bdb5"/><path d="M660 560 L1000 370 L880 600 L570 880z" fill="#93a89c"/></svg>
<span class="t" style="left:850.80px;top:620.00px;font-size:12px;color:#000;"><span class="r" style="font-size:11.04px;width:34.76px;transform:scaleX(1.0504)">多角柱</span></span>
</li><li>
<svg style="left:948px;top:581px" width="40" height="36" viewBox="0 0 1088 979"><path d="M860 400 Q1000 450 1000 560 L960 700 L820 850 L620 860 L600 800z" fill="#e1e1e5"/><path d="M135 610 L470 110 L1005 145 L615 780z" fill="url(#gNavy)" stroke="#1f2280" stroke-width="14" stroke-linejoin="round"/><path d="M520 240 L670 185 L770 260 L720 440 L560 600 L390 625 L320 530 L370 380z" fill="#b3b7cb" stroke="#dfe6e4" stroke-width="10"/><path d="M520 240 L670 185 L770 260 L720 440 L660 400z" fill="#ced3e7"/><path d="M380 400 L560 600 L390 625 L320 530z" fill="#a9adbd"/></svg>
<span class="t" style="left:943.10px;top:620.00px;font-size:12px;color:#000;"><span class="r" style="font-size:11.04px;width:50.08px;transform:scaleX(1.0609)">多角柱 穴</span></span>
</li>
<li>
<svg style="left:848px;top:656px" width="40" height="36" viewBox="0 0 1088 979"><circle cx="565" cy="475" r="385" fill="url(#gSph)"/><circle cx="565" cy="475" r="375" fill="none" stroke="#a7bbae" stroke-width="22"/><g filter="url(#fBlur)"><ellipse cx="500" cy="165" rx="90" ry="35" fill="#f2fbf6"/><ellipse cx="510" cy="350" rx="110" ry="75" fill="#7f9bb3" opacity="0.8"/><ellipse cx="430" cy="490" rx="55" ry="50" fill="#c9f2f1"/><ellipse cx="740" cy="500" rx="90" ry="100" fill="#e4f5f0"/><path d="M400 600 Q560 760 820 700 Q600 820 420 700z" fill="#7f9997"/><path d="M200 560 Q300 580 400 600" stroke="#8ea8a4" stroke-width="30" fill="none"/></g></svg>
<span class="t" style="left:862.75px;top:695.00px;font-size:12px;color:#000;"><span class="r" style="font-size:11.04px;width:11.55px;transform:scaleX(1.0474)">球</span></span>
</li><li>
<svg style="left:948px;top:656px" width="40" height="36" viewBox="0 0 1088 979"><path d="M420 680 L580 640 L640 800z" fill="#e6e6ea"/><path d="M135 520 L580 125 L970 180 L900 400 L470 660z" fill="url(#gNavy)" stroke="#1f2280" stroke-width="14" stroke-linejoin="round"/><path d="M340 480 Q400 250 700 200 Q920 200 960 380 Q980 600 820 760 Q700 820 620 740 Q560 660 560 580 Q400 580 340 480z" fill="url(#gHole)" stroke="#8c92bc" stroke-width="12"/><path d="M360 470 Q440 270 700 225" stroke="#f0f3f6" stroke-width="30" fill="none"/><path d="M560 580 Q760 520 900 380" stroke="#b9bfd2" stroke-width="16" fill="none"/></svg>
<span class="t" style="left:956.10px;top:695.00px;font-size:12px;color:#000;"><span class="r" style="font-size:11.04px;width:25.95px;transform:scaleX(1.0320)">球 穴</span></span>
</li>
<li>
<svg style="left:848px;top:731px" width="40" height="36" viewBox="0 0 1088 979"><path d="M240 100 L490 510 L500 890 L290 450z" fill="url(#gLeft)"/><path d="M490 510 Q800 440 930 260 L890 610 Q760 800 500 890z" fill="url(#gRight)"/><path d="M240 100 L930 260 Q800 440 490 510z" fill="url(#gTop)"/></svg>
<span class="t" style="left:858.55px;top:771.00px;font-size:12px;color:#000;"><span class="r" style="font-size:12.48px;width:17.57px;transform:scaleX(0.7042)">パイ</span></span>
</li><li>
<svg style="left:948px;top:731px" width="40" height="36" viewBox="0 0 1088 979"><path d="M720 190 Q960 200 980 400 Q940 580 780 620z" fill="#e1e1e5"/><path d="M220 115 L770 285 L700 920 L220 670z" fill="url(#gNavy)" stroke="#1f2280" stroke-width="14" stroke-linejoin="round"/><ellipse cx="475" cy="500" rx="165" ry="240" fill="url(#gHole)" stroke="#eef2f0" stroke-width="12"/><path d="M290 450 L450 510 L320 585z" fill="#30339a"/></svg>
<span class="t" style="left:952.30px;top:770.00px;font-size:12px;color:#000;"><span class="r" style="font-size:12.48px;width:21.84px;transform:scaleX(0.7687)">パイ </span><span class="r" style="font-size:11.04px;width:11.31px;transform:scaleX(1.0250)">穴</span></span>
</li>
<li>
<svg style="left:848px;top:806px" width="40" height="36" viewBox="0 0 1088 979"><circle cx="562" cy="480" r="300" fill="none" stroke="url(#gTor)" stroke-width="170"/><circle cx="562" cy="480" r="380" fill="none" stroke="#a9c0b6" stroke-width="14"/><circle cx="565" cy="480" r="218" fill="none" stroke="#6d8680" stroke-width="22"/></svg>
<span class="t" style="left:849.90px;top:845.00px;font-size:12px;color:#000;"><span class="r" style="font-size:12.48px;width:35.20px;transform:scaleX(0.7091)">トーラス</span></span>
</li><li>
<svg style="left:948px;top:806px" width="40" height="36" viewBox="0 0 1088 979"><path d="M135 690 L360 110 L1005 225 L780 880z" fill="url(#gNavy)" stroke="#1f2280" stroke-width="14" stroke-linejoin="round"/><ellipse cx="590" cy="480" rx="295" ry="285" fill="#ccd1e1" stroke="#eff2f2" stroke-width="14"/><ellipse cx="585" cy="478" rx="180" ry="165" fill="none" stroke="#e6e9ee" stroke-width="20"/><ellipse cx="585" cy="475" rx="135" ry="120" fill="#4d51a6" stroke="#2b2e8e" stroke-width="16"/></svg>
<span class="t" style="left:943.60px;top:845.00px;font-size:12px;color:#000;"><span class="r" style="font-size:12.48px;width:38.18px;transform:scaleX(0.7191)">トーラス </span><span class="r" style="font-size:11.04px;width:10.58px;transform:scaleX(0.9588)">穴</span></span>
</li>
<li>
<div class="b" style="left:818px;top:881px;width:220px;height:30px;overflow:hidden">
<svg style="left:30px;top:0px" width="40" height="36" viewBox="0 0 1088 979"><path d="M920 90 L700 870 L380 870 Q180 600 190 500 Q220 380 300 330z" fill="url(#gCone)"/></svg>
<svg style="left:130px;top:0px" width="40" height="36" viewBox="0 0 1088 979"><path d="M155 720 L580 90 L880 115 L840 200 L480 830 L220 830z" fill="url(#gNavy)" stroke="#1f2280" stroke-width="14" stroke-linejoin="round"/><path d="M820 180 Q560 260 430 480 Q360 640 480 760 L1000 800 L960 600z" fill="url(#gHole)" stroke="#eef2f0" stroke-width="12"/></svg>
</div></li>
</ul>
<div class="b" style="left:819px;top:914px;width:57px;height:16px;background:#f2f2f2;border-radius:4px;"></div>
<svg style="left:822px;top:915px" width="16" height="14"><path d="M1.5 7l6-5v3h7v4h-7v3z" fill="#aaa"/></svg>
<span class="t" style="left:846.50px;top:916.00px;font-size:12.5px;color:#666;"><span class="r" style="font-size:11.5px;width:11.50px;transform:scaleX(1.0000)">戻</span><span class="r" style="font-size:13.0px;width:9.76px;transform:scaleX(0.7500)">る</span></span>
<div class="b" style="left:878.5px;top:913px;width:119.5px;height:18px;background:#fdfdfd;border:1px solid #d2d2d2;border-radius:4px;"></div>
<span class="t" style="left:900.20px;top:916.00px;font-size:12.5px;color:#000;"><span class="r" style="font-size:13.0px;width:74.51px;transform:scaleX(0.7264)">すべてのカタログ</span></span>
<div class="b" style="left:1001px;top:914px;width:53px;height:16px;background:#f2f2f2;border-radius:4px;"></div>
<div class="b" style="left:817px;top:932px;width:240px;height:1px;background:#cfcfcf;"></div>
<div class="b" style="left:919px;top:932px;width:50px;height:22px;background:#fbfbfb;border:1px solid #b9b9b9;border-top:0;"></div>
<span class="t" style="left:823.25px;top:937.00px;font-size:12px;color:#444;"><span class="r" style="font-size:12px;width:37.52px;transform:scaleX(0.9867)">Robots</span></span>
<span class="t" style="left:871.75px;top:936.00px;font-size:12.5px;color:#444;"><span class="r" style="font-size:13.0px;width:41.65px;transform:scaleX(0.8008)">スタート</span></span>
<span class="t" style="left:924.25px;top:936.00px;font-size:12.5px;color:#333;"><span class="r" style="font-size:13.0px;width:38.50px;transform:scaleX(0.7401)">シェイプ</span></span>
<span class="t" style="left:976.00px;top:937.00px;font-size:12.5px;color:#444;"><span class="r" style="font-size:11.5px;width:25.00px;transform:scaleX(1.0870)">板金</span></span>
<span class="t" style="left:1015.00px;top:937.00px;font-size:12.5px;color:#444;"><span class="r" style="font-size:11.5px;width:13.69px;transform:scaleX(1.1901)">色</span></span>
<svg style="left:1041.8px;top:939px" width="10" height="9"><rect x="1" y="1" width="8" height="1.6" fill="#666"/><path d="M1.2 4h7.6l-3.8 4.2z" fill="#666"/></svg>
</aside>
<footer>
<div class="b" style="left:0px;top:955px;width:1085px;height:1px;background:#d0d0d0;"></div>
<div class="b" style="left:0px;top:956px;width:1085px;height:21px;background:#fdfdfd;"></div>
<div class="b" style="left:1085px;top:139px;width:1px;height:838px;background:#ececec;"></div>
<div class="b" style="left:1086px;top:40px;width:1px;height:938px;background:#f5f3f0;"></div>
<div class="b" style="left:0px;top:956px;width:2px;height:21px;background:#e8e8e8;"></div>
<div class="b" style="left:0px;top:977px;width:1088px;height:1px;background:#c4d6ee;"></div>
<div class="b" style="left:0px;top:978px;width:1088px;height:1px;background:#1a63c6;"></div>
<a class="t" style="left:4.80px;top:962.00px;font-size:12px;color:#1a5fd0;"><span class="r" style="font-size:12px;width:97.24px;transform:scaleX(1.0341)">www.ironcad.com</span></a>
<div class="b" style="left:5px;top:973px;width:97px;height:1px;background:#1a5fd0;"></div>
<span class="t" style="left:143.30px;top:960.00px;font-size:12.5px;color:#333;"><span class="r" style="font-size:13.0px;width:60.97px;transform:scaleX(0.7882)">ビューサイズ</span><span class="r" style="font-size:12.5px;width:3.37px;transform:scaleX(0.9668)">:</span></span>
<span class="t" style="left:215.45px;top:961.00px;font-size:12px;color:#333;"><span class="r" style="font-size:12px;width:24.53px;transform:scaleX(0.8356)">585 x</span></span>
<span class="t" style="left:248.00px;top:961.00px;font-size:12px;color:#333;"><span class="r" style="font-size:12px;width:16.73px;transform:scaleX(0.8350)">796</span></span>
<svg style="left:278px;top:959px" width="14" height="16"><rect x="7.6" y="0.6" width="4.9" height="14.2" fill="#f7cf74" stroke="#d9a33a" stroke-width="1"/><path d="M8.4 3h2.4M8.4 5.6h2.4M8.4 8.2h2.4M8.4 10.8h2.4M8.4 13h2.4" stroke="#c58d2a" stroke-width="0.9"/><rect x="1.4" y="3.9" width="3.6" height="3" fill="#fff6dc" stroke="#d9a33a" stroke-width="1"/><path d="M5 5.4h2.6" stroke="#d9a33a" stroke-width="1"/></svg>
<span class="t" style="left:295.85px;top:959.00px;font-size:14px;color:#000;"><span class="r j" style="font-size:12.88px;width:24.79px;transform:scaleX(0.9621)">単位</span><span class="r" style="font-size:14.0px;width:3.44px;transform:scaleX(0.8851)">:</span></span>
<span class="t" style="left:339.25px;top:962.00px;font-size:12px;color:#333;"><span class="r" style="font-size:12px;width:47.40px;transform:scaleX(1.0152)">mm, deg</span></span>
<svg style="left:400px;top:959px" width="18" height="18"><circle cx="7" cy="7" r="5.6" fill="#f2fafa" stroke="#a9c3c3" stroke-width="1.2"/><path d="M4 3.5h4l1.5 1.5v5H4z" fill="#fff" stroke="#888" stroke-width="0.8"/><path d="M11.2 11.2l4.6 4.8" stroke="#666" stroke-width="1.9"/></svg>
<svg style="left:422.5px;top:959px" width="18" height="18"><circle cx="7" cy="7" r="5.6" fill="#f2fafa" stroke="#a9c3c3" stroke-width="1.2"/><rect x="3.5" y="3.5" width="6.5" height="6.5" fill="#fff" stroke="#888" stroke-width="0.8"/><path d="M11.2 11.2l4.6 4.8" stroke="#666" stroke-width="1.9"/></svg>
<svg style="left:446.4px;top:966.2px" width="6" height="4"><path d="M0 0h5.2l-2.6 3z" fill="#3c3c3c"/></svg>
<svg style="left:458px;top:960px" width="18" height="16"><path d="M1.4 5.4 L4.6 2.6 H12 V10.6 L9.4 13.6 H1.4z" fill="#ffda30" stroke="#8a7a20" stroke-width="0.8"/><path d="M1.4 5.4 L4.6 2.6 H12 L9.4 5.4z" fill="#fff3a8" stroke="#8a7a20" stroke-width="0.7"/><path d="M9.4 5.4 L12 2.6 V10.6 L9.4 13.6z" fill="#8fa3d2" stroke="#6a7aa0" stroke-width="0.7"/><path d="M12.4 7 l2.6 1.4-2.6 1.4z" fill="#e03030"/></svg>
<svg style="left:481.4px;top:966.2px" width="6" height="4"><path d="M0 0h5.2l-2.6 3z" fill="#3c3c3c"/></svg>
<svg style="left:492.4px;top:959.4px" width="17" height="17"><path d="M1 5.5 L4.5 1.5 H15.5 V12 L12 16 H1z" fill="#4f8fd8" stroke="#3f74b8" stroke-width="0.9"/><path d="M1 5.5 L4.5 1.5 H15.5 L12 5.5z" fill="#f2f6fb" stroke="#4a7ab8" stroke-width="0.8"/><path d="M12 5.5 L15.5 1.5 V12 L12 16z" fill="#dcdfe6" stroke="#4a7ab8" stroke-width="0.8"/></svg>
<svg style="left:516.9px;top:966.2px" width="6" height="4"><path d="M0 0h5.2l-2.6 3z" fill="#3c3c3c"/></svg>
<svg style="left:528px;top:960px" width="18" height="17"><path d="M1 7h3" stroke="#555" stroke-dasharray="1 1"/><circle cx="8" cy="3.5" r="1.5" fill="#555"/><circle cx="8" cy="8" r="3.2" fill="#4f8ed6" stroke="#1c3f80" stroke-width="0.8"/><rect x="9" y="9" width="7" height="7" fill="#fff" stroke="#333" stroke-width="1.2"/><rect x="11" y="12" width="3" height="3" fill="#333"/></svg>
<svg style="left:551.4px;top:966.2px" width="6" height="4"><path d="M0 0h5.2l-2.6 3z" fill="#3c3c3c"/></svg>
<svg style="left:530px;top:955px" width="200" height="24" viewBox="0 0 1088 131"><g stroke="#34558c" stroke-width="5" stroke-linejoin="round"><path d="M188 63 L245 55 L245 101 L188 106z" fill="#8fb0e0"/><path d="M188 63 L216 38 L262 33 L245 55z" fill="#b9cdec"/><path d="M245 55 L262 33 L262 76 L245 101z" fill="#6f90ca"/></g><g fill="#e8f6f8" stroke="#8e9a9c" stroke-width="5"><ellipse cx="330" cy="76" rx="17" ry="19"/><ellipse cx="368" cy="84" rx="15" ry="18"/></g><path d="M318 60 Q322 40 342 38 M380 70 Q392 60 394 46 M347 76 Q352 72 356 78" fill="none" stroke="#8e9a9c" stroke-width="5"/><path d="M670 78 Q670 52 700 52 L700 38 L724 58 L700 76 L700 64 Q684 64 684 78z" fill="#b4b4b4"/><path d="M720 72 V108 L728 100 L735 112 L741 109 L734 98 L744 96z" fill="#fff" stroke="#b0b0b0" stroke-width="4" stroke-linejoin="round"/></svg>
<svg style="left:605.9px;top:966.2px" width="6" height="4"><path d="M0 0h5.2l-2.6 3z" fill="#3c3c3c"/></svg>
<svg style="left:618px;top:959px" width="17" height="17"><path d="M1 5.5 L4.5 1.5 H15.5 V12 L12 16 H1z" fill="#4f8ed6" stroke="#1c3f80" stroke-width="0.9"/><path d="M1 5.5 L4.5 1.5 H15.5 L12 5.5z" fill="#7fb0ea" stroke="#1c3f80" stroke-width="0.8"/><path d="M12 5.5 L15.5 1.5 V12 L12 16z" fill="#3a78c4" stroke="#1c3f80" stroke-width="0.8"/></svg>
<svg style="left:638.9px;top:966.2px" width="6" height="4"><path d="M0 0h5.2l-2.6 3z" fill="#3c3c3c"/></svg>
<div class="b" style="left:672px;top:958px;width:24px;height:19px;background:#c9c9c9;"></div>
<svg style="left:678px;top:960px" width="12" height="16"><path d="M2 1.2 V12.5 L4.8 10 L7 14.6 L8.8 13.8 L6.6 9.2 L10.2 9z" fill="#fff" stroke="#222" stroke-width="1.1" stroke-linejoin="round"/></svg>
<svg style="left:700px;top:960px" width="18" height="16"><rect x="0.5" y="1.5" width="12" height="7" fill="#fff" stroke="#d4d4d4"/><path d="M8 5 V13.4 L10 11.6 L11.6 15 L13 14.3 L11.4 11 L14 10.8z" fill="#fff" stroke="#222" stroke-width="1" stroke-linejoin="round"/></svg>
<div class="b" style="left:720px;top:958px;width:140px;height:20px;background:#fff;border:1px solid #d0d0d0;"></div>
<span class="t" style="left:722.20px;top:962.00px;font-size:13px;color:#000;"><span class="r" style="font-size:11.96px;width:26.32px;transform:scaleX(1.1008)">任意</span></span>
<svg style="left:850.9px;top:967.1px" width="6" height="4"><path d="M0 0h5.2l-2.6 3z" fill="#666"/></svg>
<div class="b" style="left:861px;top:958px;width:181px;height:20px;background:#fff;border:1px solid #d0d0d0;"></div>
<span class="t" style="left:862.50px;top:962.00px;font-size:12px;color:#000;"><span class="r" style="font-size:12px;width:38.03px;transform:scaleX(1.0000)">Default</span></span>
<svg style="left:1032.0px;top:967.1px" width="6" height="4"><path d="M0 0h5.2l-2.6 3z" fill="#666"/></svg>
<svg style="left:1045.6px;top:961.6px" width="16" height="15"><rect x="4.8" y="0.7" width="5.4" height="4" fill="#f00000" stroke="#5a8ad8" stroke-width="0.7"/><rect x="0.6" y="7.6" width="5.4" height="4.4" fill="#9dbce4" stroke="#5a8ad8" stroke-width="0.8"/><rect x="8.8" y="7.6" width="5.4" height="4.4" fill="#ffe45e" stroke="#5a8ad8" stroke-width="0.8"/><path d="M7.5 4.8v1.4M3.4 7.6V6.2h8.2V7.6" fill="none" stroke="#3f74d0" stroke-width="0.9"/></svg>
<svg style="left:1072px;top:965px" width="10" height="10"><g fill="#b0b0b0"><rect x="6" y="0" width="2" height="2"/><rect x="3" y="3" width="2" height="2"/><rect x="6" y="3" width="2" height="2"/><rect x="0" y="6" width="2" height="2"/><rect x="3" y="6" width="2" height="2"/><rect x="6" y="6" width="2" height="2"/></g></svg>
</footer>
</div>
</body>
</html>
